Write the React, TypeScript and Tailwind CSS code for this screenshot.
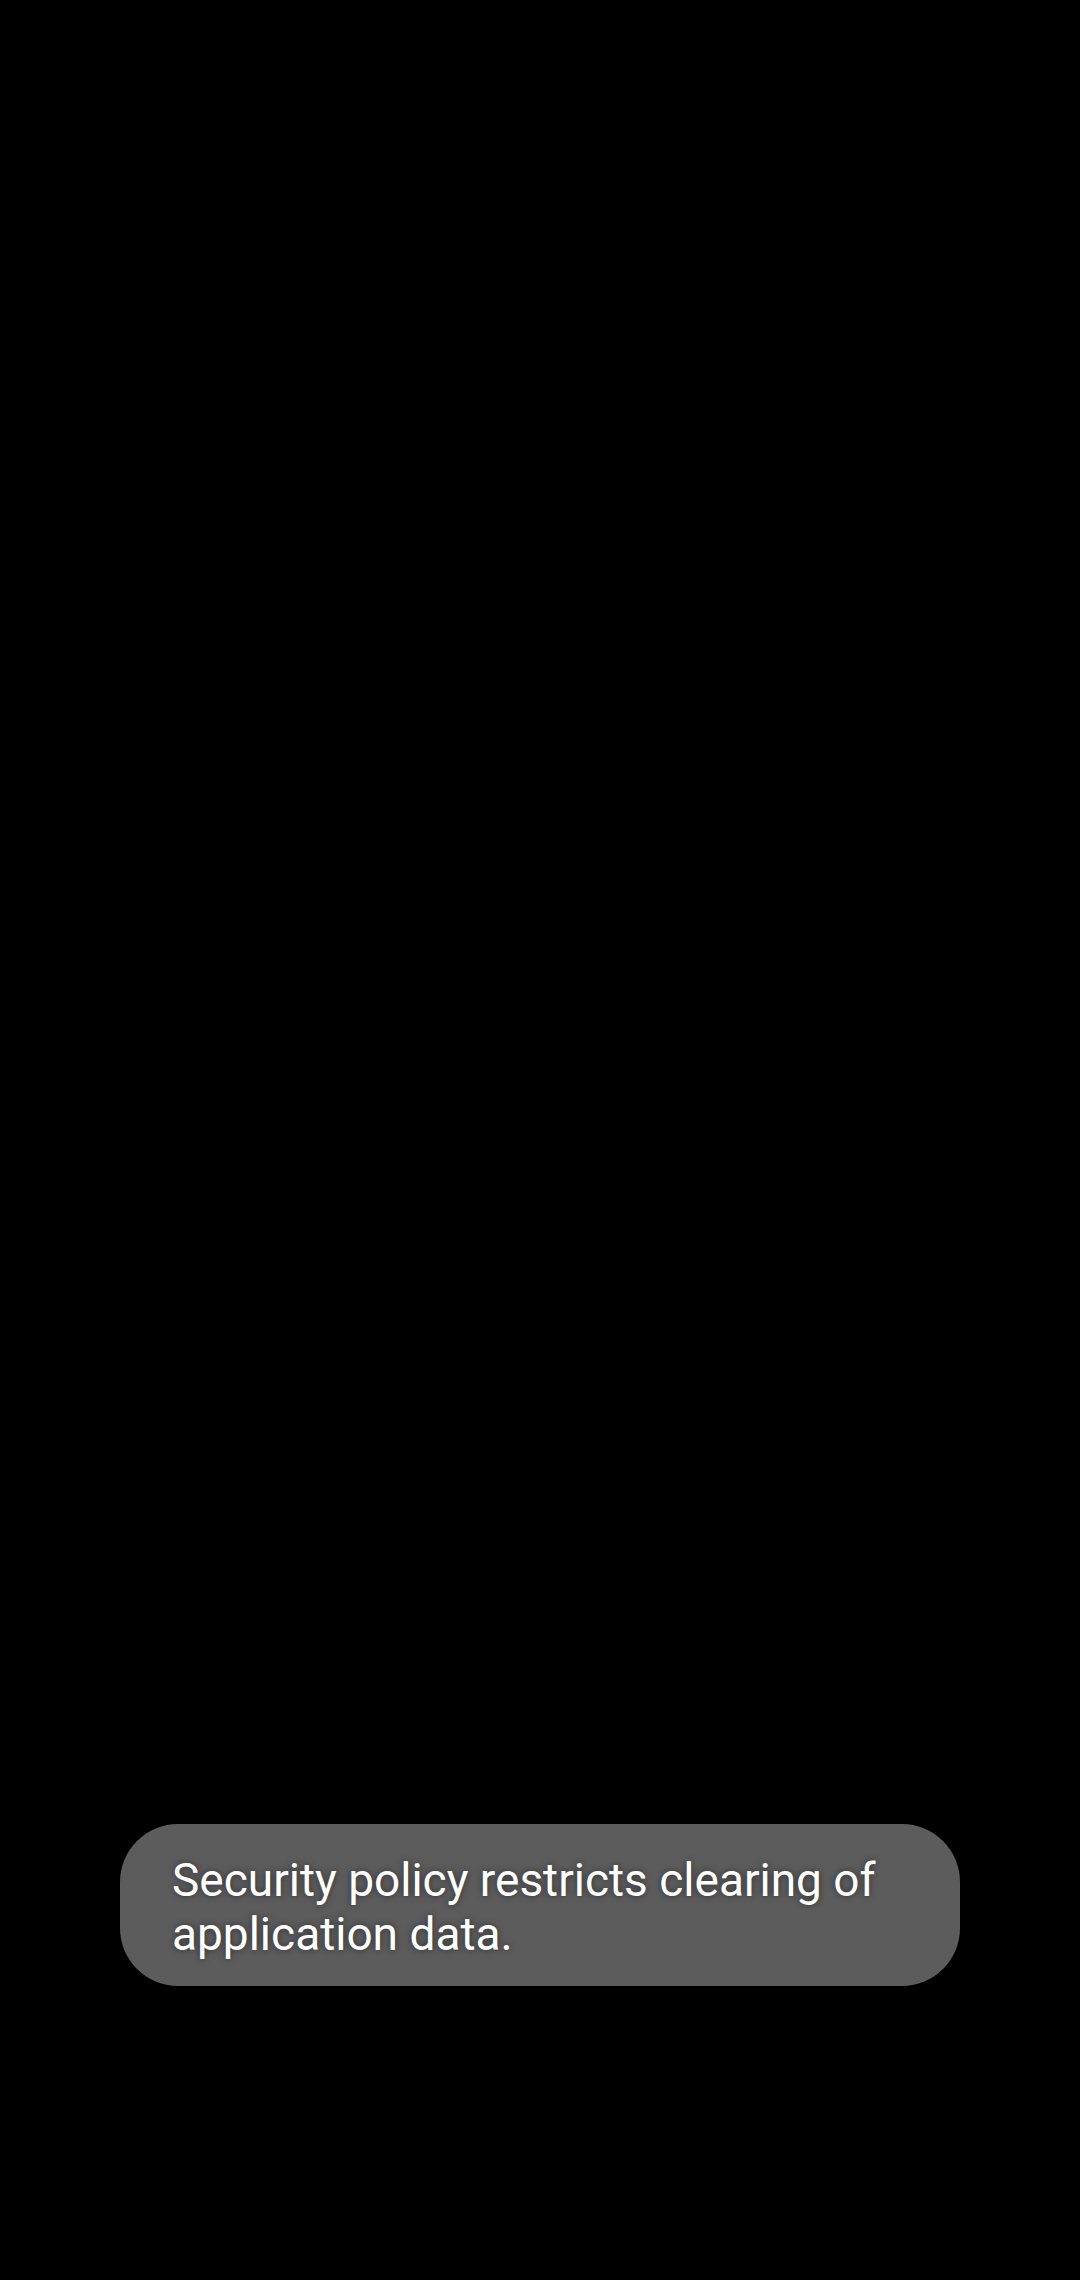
export default function App() {
  return (
    <main className="flex min-h-screen flex-col justify-end bg-black px-[120px] pb-[294px]">
      <div
        role="status"
        className="rounded-[58px] bg-[#5c5c5c] px-[52px] pt-[29px] pb-[25px] font-[Roboto,sans-serif] text-[46px] leading-[54px] text-white [text-shadow:0_0_6px_rgba(0,0,0,0.5)]"
      >
        <p>Security policy restricts clearing of application data.</p>
      </div>
    </main>
  );
}
